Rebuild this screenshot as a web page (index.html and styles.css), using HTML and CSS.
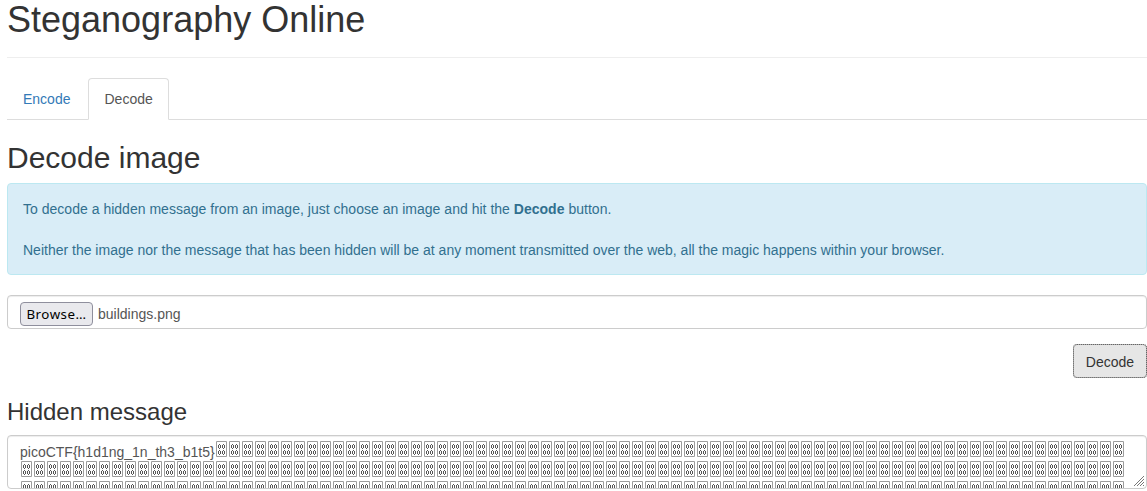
FILE: index.html
```html
<!DOCTYPE html>
<html lang="en">
<head>
<meta charset="utf-8">
<title>Steganography Online</title>
<link rel="stylesheet" href="styles.css">
</head>
<body>
<main class="container">
  <h1 class="page-title">Steganography Online</h1>
  <nav class="tabs">
    <a class="tab">Encode</a>
    <a class="tab tab-active">Decode</a>
  </nav>
  <h2 class="section-title">Decode image</h2>
  <div class="alert">
    <p class="intro">To decode a hidden message from an image, just choose an image and hit the <strong>Decode</strong> button.</p>
    <p>Neither the image nor the message that has been hidden will be at any moment transmitted over the web, all the magic happens within your browser.</p>
  </div>
  <div class="field file-field">
    <button class="browse">Browse…</button>
    <span class="file-name">buildings.png</span>
  </div>
  <div class="actions"><button class="decode-button">Decode</button></div>
  <h3 class="message-title">Hidden message</h3>
  <div class="field message">
    <div class="line">
      <span class="line-text">picoCTF{h1d1ng_1n_th3_b1t5}</span>
      <svg class="boxes" width="910" height="20">
        <defs>
          <pattern id="nul" width="13" height="20" patternUnits="userSpaceOnUse">
            <path d="M1.5 .5h10v15h-10z" fill="none" stroke="#9d9d9d"/>
            <path d="M4 3h1v1h-1zM3 4h1v3h-1zM5 4h1v3h-1zM4 7h1v1h-1zM8 3h1v1h-1zM7 4h1v3h-1zM9 4h1v3h-1zM8 7h1v1h-1zM4 9h1v1h-1zM3 10h1v3h-1zM5 10h1v3h-1zM4 13h1v1h-1zM8 9h1v1h-1zM7 10h1v3h-1zM9 10h1v3h-1zM8 13h1v1h-1z" fill="#555"/>
          </pattern>
        </defs>
        <rect width="910" height="20" fill="url(#nul)"/>
      </svg>
    </div>
    <div class="line"><svg class="boxes" width="1105" height="20"><rect width="1105" height="20" fill="url(#nul)"/></svg></div>
    <div class="line"><svg class="boxes" width="1105" height="20"><rect width="1105" height="20" fill="url(#nul)"/></svg></div>
    <svg class="grip" width="12" height="12" viewBox="0 0 12 12"><path d="M1 11 11 1M4 11l7-7M7 11l4-4M10 11l1-1" stroke="#777" fill="none"/></svg>
  </div>
</main>
</body>
</html>
```
FILE: styles.css
```css
* { box-sizing: border-box; }

body {
  margin: 0;
  overflow: hidden;
  background: #fff;
  color: #333;
  font: 14px/20px "Liberation Sans", Arial, sans-serif;
}

.container {
  padding-left: 7px;
  height: 491px;
}

h1, h2, h3, p { margin: 0; font-weight: 400; }

.page-title {
  height: 58px;
  border-bottom: 1px solid #eee;
  font-size: 36px;
  line-height: 40px;
}

.tabs {
  display: flex;
  height: 42px;
  margin-top: 20px;
  border-bottom: 1px solid #ddd;
}

.tab {
  height: 42px;
  margin-right: 2px;
  padding: 10px 15px;
  border: 1px solid transparent;
  border-radius: 4px 4px 0 0;
  color: #337ab7;
}

.tab-active {
  border-color: #ddd #ddd #fff;
  background: #fff;
  color: #555;
}

.section-title {
  margin: 21px 0 9px;
  font-size: 30px;
  line-height: 33px;
}

.alert {
  display: flex;
  flex-direction: column;
  gap: 21px;
  height: 92px;
  padding: 15px;
  border: 1px solid #bce8f1;
  border-radius: 4px;
  background: #d9edf7;
  color: #31708f;
}

.intro { letter-spacing: .017px; }

.field {
  border: 1px solid #ccc;
  border-radius: 4px;
  box-shadow: inset 0 1px 1px rgba(0, 0, 0, .075);
  color: #555;
}

.file-field {
  display: flex;
  align-items: flex-start;
  gap: 5px;
  height: 34px;
  margin-top: 20px;
  padding: 6px 12px;
}

.browse {
  width: 73px;
  height: 24px;
  padding: 0;
  border: 1px solid #8f8f9d;
  border-radius: 4px;
  background: #e9e9ed;
  color: #000;
  font: 13.33px/20px "Noto Sans", sans-serif;
  letter-spacing: .5px;
}

.file-name { padding-top: 2px; }

.actions {
  display: flex;
  justify-content: flex-end;
  margin-top: 15px;
}

.decode-button {
  width: 74px;
  height: 34px;
  padding: 2px 0 0;
  border: 1px solid #adadad;
  border-radius: 4px;
  outline: 1px dotted #666;
  outline-offset: -1px;
  background: #e6e6e6;
  color: #333;
  font: inherit;
}

.message-title {
  margin: 20px 0 10px;
  font-size: 24px;
  line-height: 27px;
}

.message {
  position: relative;
  height: 54px;
  overflow: hidden;
  padding: 5px 12px 0;
}

.line {
  display: flex;
  height: 20px;
}

.line-text {
  flex: none;
  width: 195px;
  padding-top: 1px;
}

.boxes { flex: none; }

.grip {
  position: absolute;
  right: 1px;
  bottom: 1px;
}
```
